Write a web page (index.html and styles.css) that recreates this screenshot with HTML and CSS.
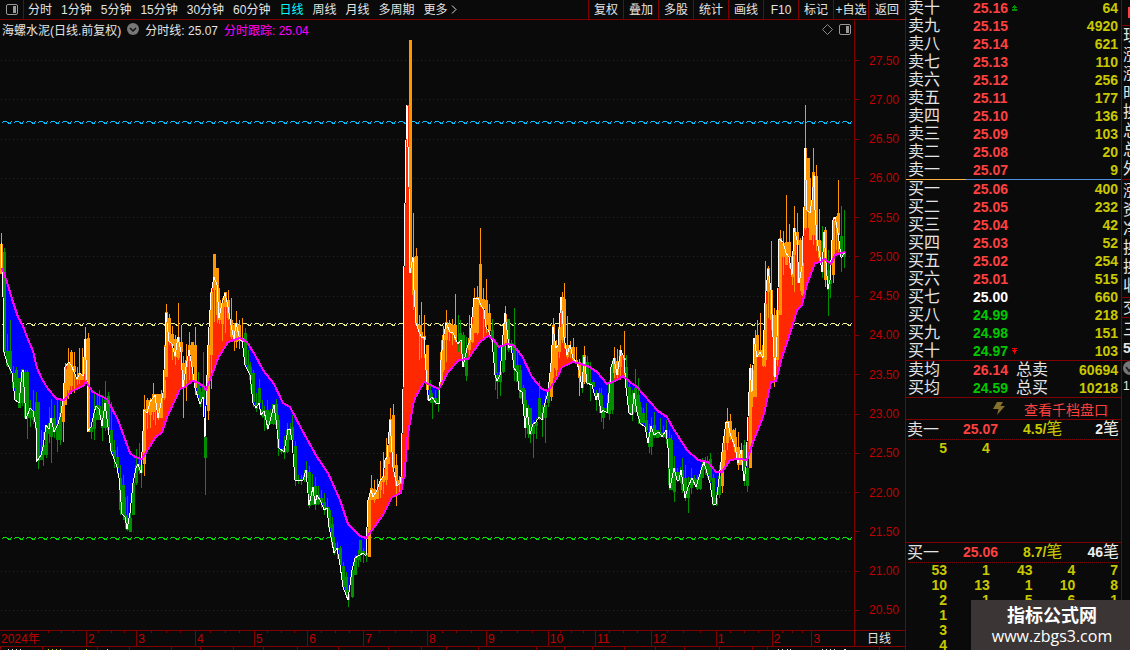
FILE: index.html
```html
<!DOCTYPE html>
<html lang="zh-CN">
<head>
<meta charset="utf-8">
<title>海螺水泥 日线</title>
<link rel="stylesheet" href="styles.css">
</head>
<body>
<div class="app">
  <main class="main">
    <nav class="toolbar">
      <button class="pane-toggle" aria-label="面板">
        <svg width="12" height="11" viewBox="0 0 12 11"><rect x=".5" y=".5" width="11" height="10" rx="1.5" fill="none" stroke="#999"/><rect x="7" y="2" width="3" height="7" fill="#999"/></svg>
      </button>
      <div class="periods">
        <button>分时</button><button>1分钟</button><button>5分钟</button><button>15分钟</button><button>30分钟</button><button>60分钟</button><button class="active">日线</button><button>周线</button><button>月线</button><button>多周期</button>
        <button class="more">更多<svg width="6" height="9" viewBox="0 0 6 9"><path d="M1 .5l4 4-4 4" fill="none" stroke="#ddd"/></svg></button>
      </div>
      <div class="tools">
        <button>复权</button><button>叠加</button><button>多股</button><button>统计</button><button>画线</button><button>F10</button><button>标记</button><button>+自选</button><button>返回</button>
      </div>
    </nav>
    <div class="plot">
      <div class="chart">
        <svg id="chart" viewBox="0 20 854 610" preserveAspectRatio="none"></svg>
        <div class="legend">
          <span>海螺水泥(日线.前复权)</span>
          <svg width="12" height="12" viewBox="0 0 12 12"><circle cx="6" cy="6" r="6" fill="#777"/><path d="M3 5l3 3 3-3" fill="none" stroke="#111" stroke-width="1.5"/></svg>
          <span>分时线: 25.07</span>
          <span class="track">分时跟踪: 25.04</span>
          <svg class="diamond" width="11" height="11" viewBox="0 0 11 11"><path d="M5.500 .5l5 5-5 5-5-5z" fill="none" stroke="#888"/></svg>
          <svg width="12" height="11" viewBox="0 0 12 11"><rect x=".5" y=".5" width="11" height="10" rx="1.5" fill="none" stroke="#999"/><rect x="7" y="2" width="3" height="7" fill="#999"/></svg>
        </div>
      </div>
      <div class="prices">
        <span>27.50</span><span>27.00</span><span>26.50</span><span>26.00</span><span>25.50</span><span>25.00</span><span>24.50</span><span>24.00</span><span>23.50</span><span>23.00</span><span>22.50</span><span>22.00</span><span>21.50</span><span>21.00</span><span>20.50</span>
      </div>
    </div>
    <div class="timeline">
      <div class="months" id="months"></div>
      <div class="mode">日线</div>
    </div>
    <svg class="ruler" viewBox="0 0 905 3" preserveAspectRatio="none">
      <path d="M.5 0v3M42.500 0v3M97.500 0v3M129.500 0v3M171.500 0v3M200.500 0v3M233.500 0v3M263.500 0v3M297.500 0v3M338.500 0v3M388.500 0v3M421.500 0v3M446.500 0v3M478.500 0v3M536.500 0v3M564.500 0v3M592.500 0v3M624.500 0v3M655.500 0v3M684.500 0v3M719.500 0v3M752.500 0v3M767.500 0v3M879.500 0v3" stroke="#800000"/>
      <path d="M8 2.500h1M12 2.500h1M16 2.500h1M20 2.500h1M107 2.500h1M778 2.500h1M782 2.500h1M787 2.500h1M790 2.500h1M822 2.500h1M826 2.500h1M830 2.500h1M834 2.500h1M844 2.500h2" stroke="#ddd"/>
      <path d="M48 2.500h1M52 2.500h1M56 2.500h1M60 2.500h1M86 2.500h1" stroke="#cc0"/>
    </svg>
  </main>

  <aside class="book">
    <table class="quotes asks">
      <tr><th>卖十</th><td class="up">25.16</td><td class="mark"><svg width="5" height="6" viewBox="0 0 5 6"><path d="M2 0h1v1h1v1h1v1h-2v1h2v2h-5v-2h2v-1h-2v-1h1v-1h1z" fill="#009000"/></svg></td><td class="vol">64</td></tr>
      <tr><th>卖九</th><td class="up">25.15</td><td></td><td class="vol">4920</td></tr>
      <tr><th>卖八</th><td class="up">25.14</td><td></td><td class="vol">621</td></tr>
      <tr><th>卖七</th><td class="up">25.13</td><td></td><td class="vol">110</td></tr>
      <tr><th>卖六</th><td class="up">25.12</td><td></td><td class="vol">256</td></tr>
      <tr><th>卖五</th><td class="up">25.11</td><td></td><td class="vol">177</td></tr>
      <tr><th>卖四</th><td class="up">25.10</td><td></td><td class="vol">136</td></tr>
      <tr><th>卖三</th><td class="up">25.09</td><td></td><td class="vol">103</td></tr>
      <tr><th>卖二</th><td class="up">25.08</td><td></td><td class="vol">20</td></tr>
      <tr><th>卖一</th><td class="up">25.07</td><td></td><td class="vol">9</td></tr>
    </table>
    <div class="ratio"></div>
    <table class="quotes bids">
      <tr><th>买一</th><td class="up">25.06</td><td></td><td class="vol">400</td></tr>
      <tr><th>买二</th><td class="up">25.05</td><td></td><td class="vol">232</td></tr>
      <tr><th>买三</th><td class="up">25.04</td><td></td><td class="vol">42</td></tr>
      <tr><th>买四</th><td class="up">25.03</td><td></td><td class="vol">52</td></tr>
      <tr><th>买五</th><td class="up">25.02</td><td></td><td class="vol">254</td></tr>
      <tr><th>买六</th><td class="up">25.01</td><td></td><td class="vol">515</td></tr>
      <tr><th>买七</th><td class="flat">25.00</td><td></td><td class="vol">660</td></tr>
      <tr><th>买八</th><td class="down">24.99</td><td></td><td class="vol">218</td></tr>
      <tr><th>买九</th><td class="down">24.98</td><td></td><td class="vol">151</td></tr>
      <tr><th>买十</th><td class="down">24.97</td><td class="mark"><svg width="5" height="6" viewBox="0 0 5 6"><path d="M0 0h5v1h-2v1h2v1h-1v1h-1v2h-1v-2h-1v-1h-1v-1h2v-1h-2z" fill="#f00"/></svg></td><td class="vol">103</td></tr>
    </table>
    <table class="quotes totals">
      <tr><th>卖均</th><td class="up">26.14</td><th>总卖</th><td class="vol">60694</td></tr>
      <tr><th>买均</th><td class="down">24.59</td><th>总买</th><td class="vol">10218</td></tr>
    </table>
    <div class="depth">
      <svg width="12" height="13" viewBox="0 0 12 13"><path d="M4 0h6L7.500 4H12L4 13l1.500-6H0z" fill="#85702a"/></svg>
      <a href="#depth">查看千档盘口</a>
    </div>
    <section class="queue ask-queue">
      <header><span class="side">卖一</span><b class="up">25.07</b><b class="avg">4.5/<i>笔</i></b><b class="count">2<i>笔</i></b></header>
      <div class="orders"><span>5</span><span>4</span></div>
    </section>
    <section class="queue">
      <header><span class="side">买一</span><b class="up">25.06</b><b class="avg">8.7/<i>笔</i></b><b class="count">46<i>笔</i></b></header>
      <div class="orders"><span>53</span><span>1</span><span>43</span><span>4</span><span>7</span><span>10</span><span>13</span><span>1</span><span>10</span><span>8</span><span>2</span><span>1</span><span>5</span><span>6</span><span>1</span><span class="first">1</span><span class="first">3</span><span class="first">4</span></div>
    </section>
  </aside>

  <aside class="details">
    <div class="flag"><i></i></div>
    <div class="info tall"><span>现</span><span>涨</span><span>涨</span><span>时</span><span>换</span><span>总</span><span>总</span><span>外</span></div>
    <div class="info"><span>涨</span><span>资</span><span>净</span><span>换</span><span>换</span><span>收</span></div>
    <div class="info"><span>交</span></div>
    <div class="info last"><span>三</span><b>5</b></div>
    <div class="info badge"><svg width="14" height="14" viewBox="0 0 14 14"><circle cx="7" cy="7" r="7" fill="#777"/><path d="M3 6l3 4 5-5" fill="none" stroke="#222" stroke-width="2"/></svg><span class="small">1</span></div>
  </aside>

  <div class="watermark"><strong>指标公式网</strong><span>www.zbgs3.com</span></div>
</div>
<script src="chart.js"></script>
</body>
</html>
```

FILE: styles.css
```css
* { box-sizing: border-box; }

body {
  margin: 0;
  background: #0a0a0a;
  color: #e4e4e4;
  font: 12px "Liberation Sans", "Noto Sans CJK SC", sans-serif;
}

button {
  padding: 0;
  border: 0;
  background: none;
  color: inherit;
  font: inherit;
  line-height: 16px;
  white-space: nowrap;
}

i { font-style: normal; }

.app {
  position: relative;
  display: flex;
  height: 100vh;
  overflow: hidden;
}

.main {
  display: flex;
  flex: 1;
  flex-direction: column;
  min-width: 0;
}

/* Toolbar */
.toolbar {
  display: flex;
  height: 20px;
  border-bottom: 1px solid #800000;
}

.pane-toggle {
  display: flex;
  align-items: center;
  justify-content: center;
  width: 24px;
  border-right: 1px solid #800000;
}

.periods {
  display: flex;
  flex: 1;
  gap: 9px;
  padding-left: 4px;
}

.periods .active { color: #00ffff; }

.more {
  display: flex;
  align-items: center;
  gap: 3px;
}

.tools { display: flex; }

.tools button {
  width: 35px;
  border-left: 1px solid #800000;
}

.tools button:last-child { width: 37px; }

/* Chart */
.plot {
  display: flex;
  flex: 1;
  min-height: 0;
}

.chart {
  position: relative;
  flex: 1;
  min-width: 0;
}

#chart {
  display: block;
  width: 100%;
  height: 100%;
  shape-rendering: crispEdges;
}

.grid { stroke: #780000; stroke-dasharray: 1 3; }
.rise { fill: #ff2800; }
.fall { fill: #0000ff; }
.o { fill: #ff9800; }
.g { fill: #009000; }
.price { fill: none; stroke: #fff; }
.average { fill: none; stroke: #ff00ff; stroke-width: 2; }

.legend {
  position: absolute;
  top: 0;
  left: 2px;
  right: 3px;
  display: flex;
  align-items: center;
  gap: 6px;
  height: 18px;
}

.legend .track { color: #ff00ff; }
.legend .diamond { margin-left: auto; }

.prices {
  display: flex;
  flex-direction: column;
  width: 51px;
  padding-top: 21px;
  border-left: 1px solid #800000;
  color: #c00000;
}

.prices span {
  display: flex;
  flex: 1;
  align-items: center;
  gap: 10px;
}

.prices span::before {
  width: 4px;
  height: 1px;
  background: #800000;
  content: "";
}

.timeline {
  display: flex;
  height: 17px;
  border: solid #800000;
  border-width: 1px 0;
  line-height: 16px;
}

.months {
  display: flex;
  flex: 1;
  color: #c00000;
}

.month {
  position: relative;
  flex-basis: 0;
  padding-left: 1px;
}

.month + .month { border-left: 1px solid #800000; }

.ticks {
  position: absolute;
  inset: 0 0 auto;
  display: flex;
  justify-content: space-evenly;
}

.month:first-child .ticks { left: 37px; }

.ticks i {
  width: 1px;
  height: 2px;
  background: #800000;
}

.mode {
  width: 51px;
  border-left: 1px solid #800000;
  padding-left: 12px;
}

.ruler {
  display: block;
  width: 100%;
  height: 3px;
  shape-rendering: crispEdges;
}

/* Order book */
.book {
  display: flex;
  flex-direction: column;
  width: 217px;
  border: solid #800000;
  border-width: 0 1px;
  font-size: 14px;
  font-weight: bold;
}

.book > * { flex: none; }

.quotes {
  width: 100%;
  border-collapse: collapse;
  table-layout: fixed;
}

.asks { margin-top: -1px; }

.quotes tr { height: 18px; }

.quotes th,
.quotes td {
  padding: 0;
  line-height: 18px;
}

.quotes th,
.side,
.queue i {
  font-size: 16px;
  font-weight: 400;
}

.quotes th {
  padding-left: 2px;
  text-align: left;
}

.quotes th:first-child { width: 67px; }
.quotes td:nth-child(2) { width: 38px; }
.quotes :nth-child(3) { width: 50px; }
.quotes .mark { padding-left: 1px; }
.totals th:nth-child(3) { padding-left: 5px; }

.mark svg {
  display: block;
  shape-rendering: crispEdges;
}

.up { color: #ff4040; }
.down { color: #00c800; }
.flat { color: #fff; }

.quotes .vol {
  padding-right: 3px;
  color: #c8c800;
  text-align: right;
}

.ratio {
  height: 1px;
  background: linear-gradient(90deg, #ffb040 28%, #5090e0 28%);
}

.bids,
.totals { border-bottom: 1px solid #800000; }

.depth {
  display: flex;
  align-items: center;
  justify-content: space-between;
  height: 22px;
  padding: 0 13px 0 87px;
  border-bottom: 1px solid #800000;
}

.depth a {
  color: #ff4040;
  font-size: 14px;
  font-weight: 400;
  text-decoration: none;
}

.ask-queue {
  height: 123px;
  border-bottom: 1px solid #800000;
}

.queue header {
  display: grid;
  grid-template-columns: 55px 60px 1fr auto;
  height: 20px;
  margin: 0 2px;
  border-bottom: 1px dotted #800000;
  line-height: 19px;
}

.queue header > :first-child { margin-left: -1px; }
.queue header i { line-height: 16px; }
.avg { color: #c8c800; }
.count { color: #eee; }

.orders {
  display: grid;
  grid-template-columns: 41px repeat(4, 1fr);
  padding-right: 3px;
  color: #c8c800;
  line-height: 15px;
  text-align: right;
}

.ask-queue .orders { padding-top: 1px; }

.orders .first { grid-column: 1; }

/* Clipped details column */
.details {
  width: 8px;
  overflow: hidden;
  font-size: 16px;
}

.flag {
  height: 26px;
  padding: 7px 0 0 6px;
  border-bottom: 1px solid #800000;
}

.flag i {
  display: block;
  width: 8px;
  height: 11px;
  background: #ff4040;
}

.info {
  display: flex;
  flex-direction: column;
  width: 20px;
  padding-left: 1px;
  border-bottom: 1px solid #800000;
  line-height: 19px;
}

.tall { padding-bottom: 1px; }
.tall + .info { padding: 1px 0 2px 1px; }

.last { height: 43px; padding-top: 2px; }

.last b { font-size: 14px; }

.badge {
  gap: 2px;
  border: 0;
}

.badge svg { flex: none; }

.small { font-size: 12px; }

.watermark {
  position: absolute;
  right: 0;
  bottom: 0;
  display: flex;
  flex-direction: column;
  align-items: center;
  width: 159px;
  height: 50px;
  padding: 5px 0 0 3px;
  background: #3c3535;
  color: #fff;
}

.watermark strong {
  font-size: 18px;
  line-height: 22px;
}

.watermark span {
  font: 16px/18px "Open Sans", "Noto Sans", sans-serif;
}
```

FILE: chart.js
```js
// Closing line, "x,y" pairs
const closeLine = `1,243 3,297 4,352 7,363 12,373 15,400 19,403 22,372 23,370 26,419 30,408 33,411 36,428 37,461 41,455 43,447 46,425 49,429 51,418 54,432 58,424 61,413 63,400 65,367 69,362 72,367 77,379 80,373 83,376 85,339 87,380 88,431 91,427 94,413 96,406 99,409 102,426 105,403 108,427 111,451 117,467 119,478 122,514 125,517 127,529 130,513 133,483 136,468 138,464 141,473 144,410 147,413 150,402 155,395 158,418 163,393 165,347 166,313 169,341 172,344 175,356 178,337 181,352 183,387 186,367 189,350 192,367 195,388 200,404 203,397 205,437 208,345 211,293 214,277 217,285 219,318 222,303 225,293 228,307 231,325 234,340 236,323 240,340 242,340 245,365 250,375 253,403 256,408 259,403 261,415 264,411 268,429 274,405 276,420 279,448 284,452 288,429 290,429 292,440 295,480 303,480 306,470 309,505 313,487 315,504 317,495 321,502 324,510 327,508 329,527 332,542 334,553 337,548 340,565 343,587 348,600 352,570 355,558 363,553 366,556 368,500 371,490 373,497 377,490 380,481 383,477 385,460 387,457 390,420 393,467 397,486 400,483 401,477 403,390 404,267 406,140 407,105 409,187 410,273 413,257 414,290 416,323 419,332 422,338 424,337 426,370 428,395 429,401 432,397 436,403 439,404 441,360 443,340 446,323 450,332 453,333 458,344 461,340 463,367 467,348 470,340 472,317 474,298 478,298 481,305 484,310 486,327 489,332 492,340 494,363 495,375 497,381 500,375 502,347 505,313 507,330 509,348 511,345 514,368 517,372 519,390 522,392 525,428 527,408 530,434 533,424 536,422 539,417 542,420 544,407 548,392 551,363 553,327 556,348 558,345 561,297 564,337 567,355 570,345 573,358 577,363 579,370 582,388 584,357 587,383 592,385 596,400 598,393 601,413 603,410 607,413 610,383 611,367 614,358 617,375 621,350 624,358 626,388 629,413 632,415 634,393 637,412 640,423 645,427 648,443 651,426 654,435 659,432 662,437 666,430 668,448 670,488 674,468 677,480 679,480 681,470 685,498 688,487 692,478 696,487 702,467 704,462 707,473 710,483 713,504 716,504 718,487 721,462 723,443 726,422 728,422 730,433 735,447 738,463 741,450 744,481 746,467 748,417 750,368 752,392 754,338 757,357 760,352 763,358 765,303 768,269 771,290 773,337 775,377 777,337 779,239 783,242 786,253 789,257 792,275 794,228 797,240 799,283 802,267 804,207 805,148 807,210 810,213 812,200 814,175 815,210 817,240 820,257 822,272 824,232 826,263 828,289 830,280 833,220 835,217 838,233 841,257 842,257 845,252`;

// Tracking average, "x,y" pairs
const averageLine = `2,268 7,282 13,302 18,317 23,326 27,337 33,351 37,368 42,379 48,389 57,399 64,400 72,391 83,386 86,382 93,392 107,399 118,420 130,453 135,457 142,459 155,438 162,432 167,417 175,400 180,389 185,387 192,381 197,382 203,386 206,390 213,372 218,358 228,342 240,338 247,342 255,355 263,370 274,384 283,403 290,407 302,430 317,457 328,473 340,500 348,524 360,536 366,538 372,530 383,515 392,497 401,493 405,470 407,440 413,405 415,398 424,382 439,389 448,372 459,360 468,359 480,342 488,336 493,339 499,347 507,344 513,345 522,356 532,377 542,389 548,391 557,378 562,367 573,362 588,366 597,372 607,384 617,380 623,376 630,382 637,387 650,402 658,411 667,417 673,428 687,450 698,460 708,462 716,472 722,472 730,460 738,459 747,460 753,442 764,414 767,400 771,382 776,381 782,357 792,327 797,310 802,305 807,284 815,263 820,262 825,259 831,264 835,255 845,252`;

// Bars: colour, x, wick top, body top, body bottom, wick bottom
const bars = `o1 233 244 274 274;g4 248 252 353 355;g7 334 351 366 367;g10 320 351 370 374;g13 366 373 388 388;g16 367 370 400 402;g19 378 378 408 408;g22 369 369 403 406;g25 370 372 418 418;g27 370 372 418 439;g30 400 408 418 427;g33 390 411 420 424;g36 392 402 430 461;g38 402 402 461 469;g41 430 455 460 460;g43 432 445 455 466;g46 425 425 455 458;g49 407 423 434 443;g51 399 418 437 463;g54 405 418 432 438;g57 400 425 440 452;g60 400 413 440 445;o63 396 400 422 442;o65 363 369 405 405;o68 348 363 390 399;o71 350 352 386 394;o74 352 366 372 393;o77 367 377 380 385;o79 348 373 380 384;o82 348 375 380 380;o85 327 339 374 382;o88 333 338 432 432;g91 425 427 432 439;g94 391 413 429 440;g97 394 405 420 420;g99 390 406 415 420;g102 395 410 428 441;g105 381 400 428 431;g108 392 396 430 432;g111 402 430 452 455;g114 440 450 457 468;g117 447 457 468 474;g120 465 478 510 515;g123 475 485 515 520;g125 497 515 520 529;g127 496 518 530 531;g130 504 518 532 532;g133 480 483 515 515;g136 449 465 483 485;g139 443 465 471 474;g141 460 465 473 488;o144 395 409 464 476;o147 398 400 412 429;o150 398 400 415 428;o153 383 394 412 420;o155 394 394 405 425;o158 394 394 418 420;o161 390 394 418 418;o164 345 380 398 400;o166 304 312 377 377;o169 314 318 342 345;o172 326 334 346 360;o175 335 339 357 365;o178 303 337 358 360;o181 325 342 352 360;o183 356 363 387 418;o186 344 360 367 401;o189 332 345 355 380;o192 342 342 367 380;o195 327 345 388 395;g198 372 382 394 395;g200 388 392 404 407;g203 352 385 399 411;g205 430 437 458 495;o208 345 345 411 420;o211 290 292 355 389;o214 254 254 290 322;o217 268 268 315 323;o219 288 300 320 324;o222 298 303 324 341;o225 292 292 307 333;o228 290 300 318 320;o231 298 320 337 339;o234 323 325 341 351;o236 311 323 342 348;o239 320 325 341 349;o242 318 338 342 344;g245 328 333 365 366;g248 350 365 370 373;g250 362 367 380 390;g253 370 373 402 407;g256 393 403 409 412;g259 379 388 403 410;g262 400 410 416 418;g264 406 410 417 431;g267 400 410 428 430;g270 409 412 424 424;g273 404 404 424 425;g276 399 404 425 425;g278 415 420 448 456;g281 449 449 452 454;g284 436 448 453 459;g287 423 430 452 453;g290 423 428 440 440;g292 415 427 440 447;g295 441 446 480 486;g298 475 480 481 484;g301 475 479 481 485;g304 470 475 480 482;g306 461 470 478 479;g309 466 472 506 508;g312 474 487 505 505;g315 477 486 505 510;g318 486 495 504 505;g321 490 498 503 508;g324 493 502 510 515;g327 498 507 510 511;g329 508 510 528 532;g332 517 524 545 546;g334 537 543 553 555;g337 542 548 550 559;g340 546 548 565 566;g343 562 566 587 590;g346 572 577 593 595;g348 590 594 600 607;g352 568 570 597 598;g355 555 558 575 575;g358 550 555 560 567;g360 540 540 554 562;g363 548 551 555 563;g366 547 553 556 562;o369 496 500 557 557;o371 475 488 500 500;o374 480 489 500 503;o377 479 490 499 499;o380 461 481 490 498;o383 452 476 482 494;o386 438 460 480 485;o388 445 457 464 464;o390 408 419 452 453;o393 404 415 468 468;o396 454 465 486 506;o399 476 480 484 492;o401 475 477 482 492;o410 40 40 273 273;o413 213 257 295 310;o416 248 256 325 325;o419 315 325 332 360;o421 302 332 337 358;o424 315 336 340 358;o427 345 345 390 400;g430 380 390 401 403;g432 393 397 403 419;g435 390 398 403 405;g438 387 400 404 412;o441 340 352 385 385;o443 326 335 370 372;o446 310 322 340 362;o449 320 324 332 341;o452 319 325 334 345;o455 294 325 340 342;g458 315 342 346 352;g460 320 333 342 342;g463 332 335 367 367;g466 337 350 376 381;o469 315 338 350 357;o472 324 327 342 343;o474 288 298 333 333;o477 286 297 333 335;o480 228 264 305 307;o483 288 299 309 338;o486 279 300 325 333;o489 304 313 331 333;g492 319 330 342 345;g495 340 343 373 390;g497 372 375 382 399;g500 365 372 382 396;g503 335 338 372 373;o505 306 314 345 360;g508 319 319 350 352;g511 340 343 350 350;g514 308 345 370 381;g517 348 365 382 382;g520 365 370 398 399;g523 385 388 404 405;g525 390 400 428 438;g528 405 408 434 438;g530 408 408 435 443;g533 420 425 434 458;g536 418 422 426 439;g539 381 398 418 420;g542 405 412 420 437;g545 395 405 418 443;g548 385 392 403 407;o551 345 363 397 401;o553 318 325 368 378;o556 340 345 370 376;o559 325 327 352 358;o562 292 297 340 343;o564 283 299 338 348;o567 316 345 357 359;o570 341 347 352 358;o573 338 347 360 362;o576 347 360 364 364;o579 359 362 378 396;g582 355 365 388 393;o584 346 355 382 384;g587 356 362 384 385;g590 362 382 384 401;g593 380 382 387 387;g596 390 393 400 411;g599 388 393 397 413;g601 388 395 413 422;g603 407 408 418 429;g607 395 408 412 412;g609 380 384 414 420;g612 360 367 410 414;o614 347 358 373 378;o617 349 361 375 380;o620 345 350 367 380;o624 331 358 360 375;g626 355 367 388 390;g629 384 387 413 414;g632 390 395 414 421;g635 369 388 412 413;g638 378 395 415 424;g640 402 407 424 425;g643 408 413 423 424;g646 403 420 430 433;g649 424 433 447 453;g651 417 428 447 455;g654 412 425 436 438;g657 430 430 438 438;g660 418 432 437 437;g663 426 433 437 438;g666 420 430 438 444;g669 430 438 485 490;g671 435 440 490 490;g674 456 468 492 502;g677 468 472 480 482;g680 467 472 481 483;g682 458 470 490 493;g685 465 478 498 501;g688 477 488 498 513;g691 468 478 488 494;g694 475 478 485 485;g697 475 479 489 490;g700 470 475 489 490;g702 458 465 478 478;g705 457 461 470 475;g707 456 462 475 478;g710 453 459 480 482;g713 474 478 505 506;g716 492 498 505 506;g719 465 476 495 498;o722 443 460 486 493;o724 435 450 460 470;o727 408 421 443 450;o730 414 421 437 440;o733 429 430 442 447;o735 428 437 452 453;o738 432 447 465 470;o741 443 450 465 465;g744 440 445 481 486;g747 460 468 486 492;o750 364 368 468 468;o752 366 370 397 407;o755 330 338 397 397;o757 320 335 357 357;o760 313 350 357 357;o763 333 345 366 367;o765 261 304 360 367;o768 266 268 292 318;o771 241 290 320 330;o774 308 315 376 387;o777 306 310 360 366;o780 230 238 315 315;o783 231 243 257 275;o786 195 242 265 265;o789 224 242 257 268;o792 253 256 277 285;o794 206 228 255 292;o797 213 232 245 283;o800 238 240 283 291;o802 257 263 295 296;o805 105 148 228 230;o808 158 158 212 228;o810 178 205 240 240;o813 148 172 235 245;o816 165 176 240 251;o819 209 240 258 262;g822 226 241 272 278;o825 227 230 280 287;g828 250 270 290 316;g830 270 280 284 298;o833 217 221 275 283;o836 216 217 225 250;o838 180 213 235 252;g841 206 236 257 272;g844 210 252 257 268`;

const toPoints = text => text.split(" ").map(p => p.split(",").map(Number));

function valueAt(points, x) {
  const next = points.findIndex(p => p[0] >= x);
  if (next <= 0) return points[next < 0 ? points.length - 1 : 0][1];
  const [x0, y0] = points[next - 1];
  const [x1, y1] = points[next];
  return y0 + (y1 - y0) * (x - x0) / (x1 - x0);
}

const close = toPoints(closeLine);
const average = toPoints(averageLine);
const rect = (cls, x, y, w, h) => `<rect class="${cls}" x="${x}" y="${y}" width="${w}" height="${h}"/>`;
let art = "";

for (let i = 0; i < 15; i++) {
  const y = Math.floor(60.5 + i * 39.28) + 0.5;
  art += `<path class="grid" d="M1 ${y}H852"/>`;
}

// Wavy levels: each 12px period is stepped over three pixel rows
for (const [y, colour] of [[122, "#00c0ff"], [324, "#f0f090"], [538, "#00e800"]]) {
  let d = "";
  for (let x = 2; x < 850; x += 12) {
    d += `M${x} ${y}h1v1h-1zM${x + 1} ${y - 1}h4v1h-4zM${x + 5} ${y}h2v1h-2zM${x + 6} ${y + 1}h3v1h-3zM${x + 8} ${y}h1v1h-1zM${x + 9} ${y - 1}h1v1h-1z`;
  }
  art += `<path fill="${colour}" d="${d}"/>`;
}

// Area between the two lines
for (let x = 2; x < 845; x++) {
  const a = Math.round(valueAt(average, x));
  const c = Math.round(valueAt(close, x));
  art += c < a ? rect("rise", x, c, 1, a - c) : rect("fall", x, a, 1, c - a);
}
art += rect("rise", 403, 299, 3, 178) + rect("rise", 406, 105, 3, 345);

for (const bar of bars.split(";")) {
  const [x, high, top, bottom, low] = bar.slice(1).split(" ").map(Number);
  art += rect(bar[0], x - 1, top, 3, bottom - top) + rect(bar[0], x, high, 1, low - high);
}

art += `<polyline class="price" points="${closeLine}"/><polyline class="average" points="${averageLine}"/>`;
document.getElementById("chart").innerHTML = art;

const months = [["2024年", 88], ["2", 50], ["3", 59], ["4", 59], ["5", 53], ["6", 56], ["7", 64], ["8", 59], ["9", 62], ["10", 47], ["11", 56], ["12", 65], ["1", 56], ["2", 39], ["3", 42]];
document.getElementById("months").innerHTML = months.map(([name, share], i) =>
  `<div class="month" style="flex-grow:${share}">${name}${i < 14 ? '<div class="ticks"><i></i><i></i><i></i></div>' : ""}</div>`
).join("");
```
